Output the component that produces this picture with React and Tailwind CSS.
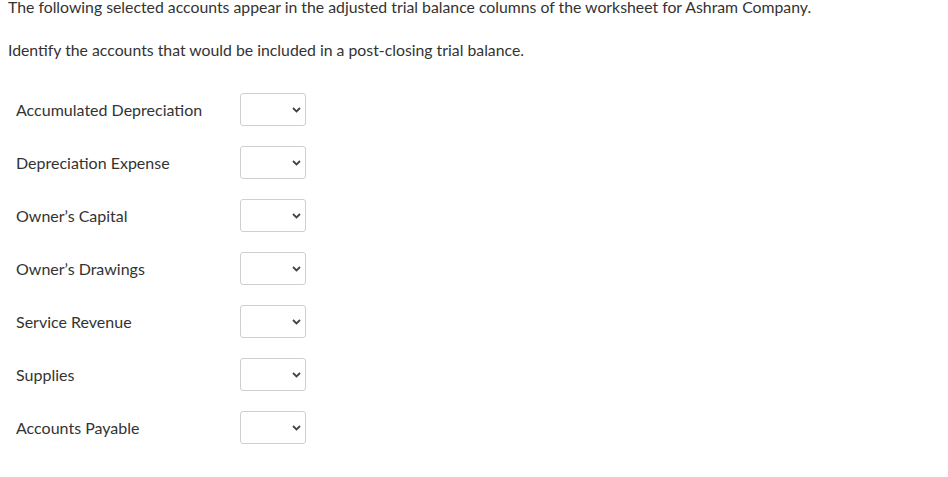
const accounts = [
  "Accumulated Depreciation",
  "Depreciation Expense",
  "Owner\u2019s Capital",
  "Owner\u2019s Drawings",
  "Service Revenue",
  "Supplies",
  "Accounts Payable",
]

const Chevron = () => (
  <svg width="9" height="6" viewBox="0 0 9 6" className="text-[#444]">
    <path d="M1 1 L4.5 4.5 L8 1" fill="none" stroke="currentColor" strokeWidth="1.8" />
  </svg>
)

export default function App() {
  return (
    <div className="min-h-[477px] bg-white px-2 text-[16px] leading-[22px] text-[#333] font-['Lato','Liberation_Sans',sans-serif]">
      <p className="-mt-[4px] text-[15.8px]">
        The following selected accounts appear in the adjusted trial balance columns of the worksheet for Ashram Company.
      </p>
      <p className="mt-[21px] text-[15.8px]">Identify the accounts that would be included in a post-closing trial balance.</p>

      {/* Account rows */}
      <div className="mt-[32px] flex flex-col gap-[20px] pl-2">
        {accounts.map((name) => (
          <div key={name} className="flex items-center">
            <div className="w-[224px]">{name}</div>
            <div className="flex h-[33px] w-[66px] items-center justify-end rounded-[3px] border border-[#cfcfcf] bg-white pr-[4px]">
              <Chevron />
            </div>
          </div>
        ))}
      </div>
    </div>
  )
}
